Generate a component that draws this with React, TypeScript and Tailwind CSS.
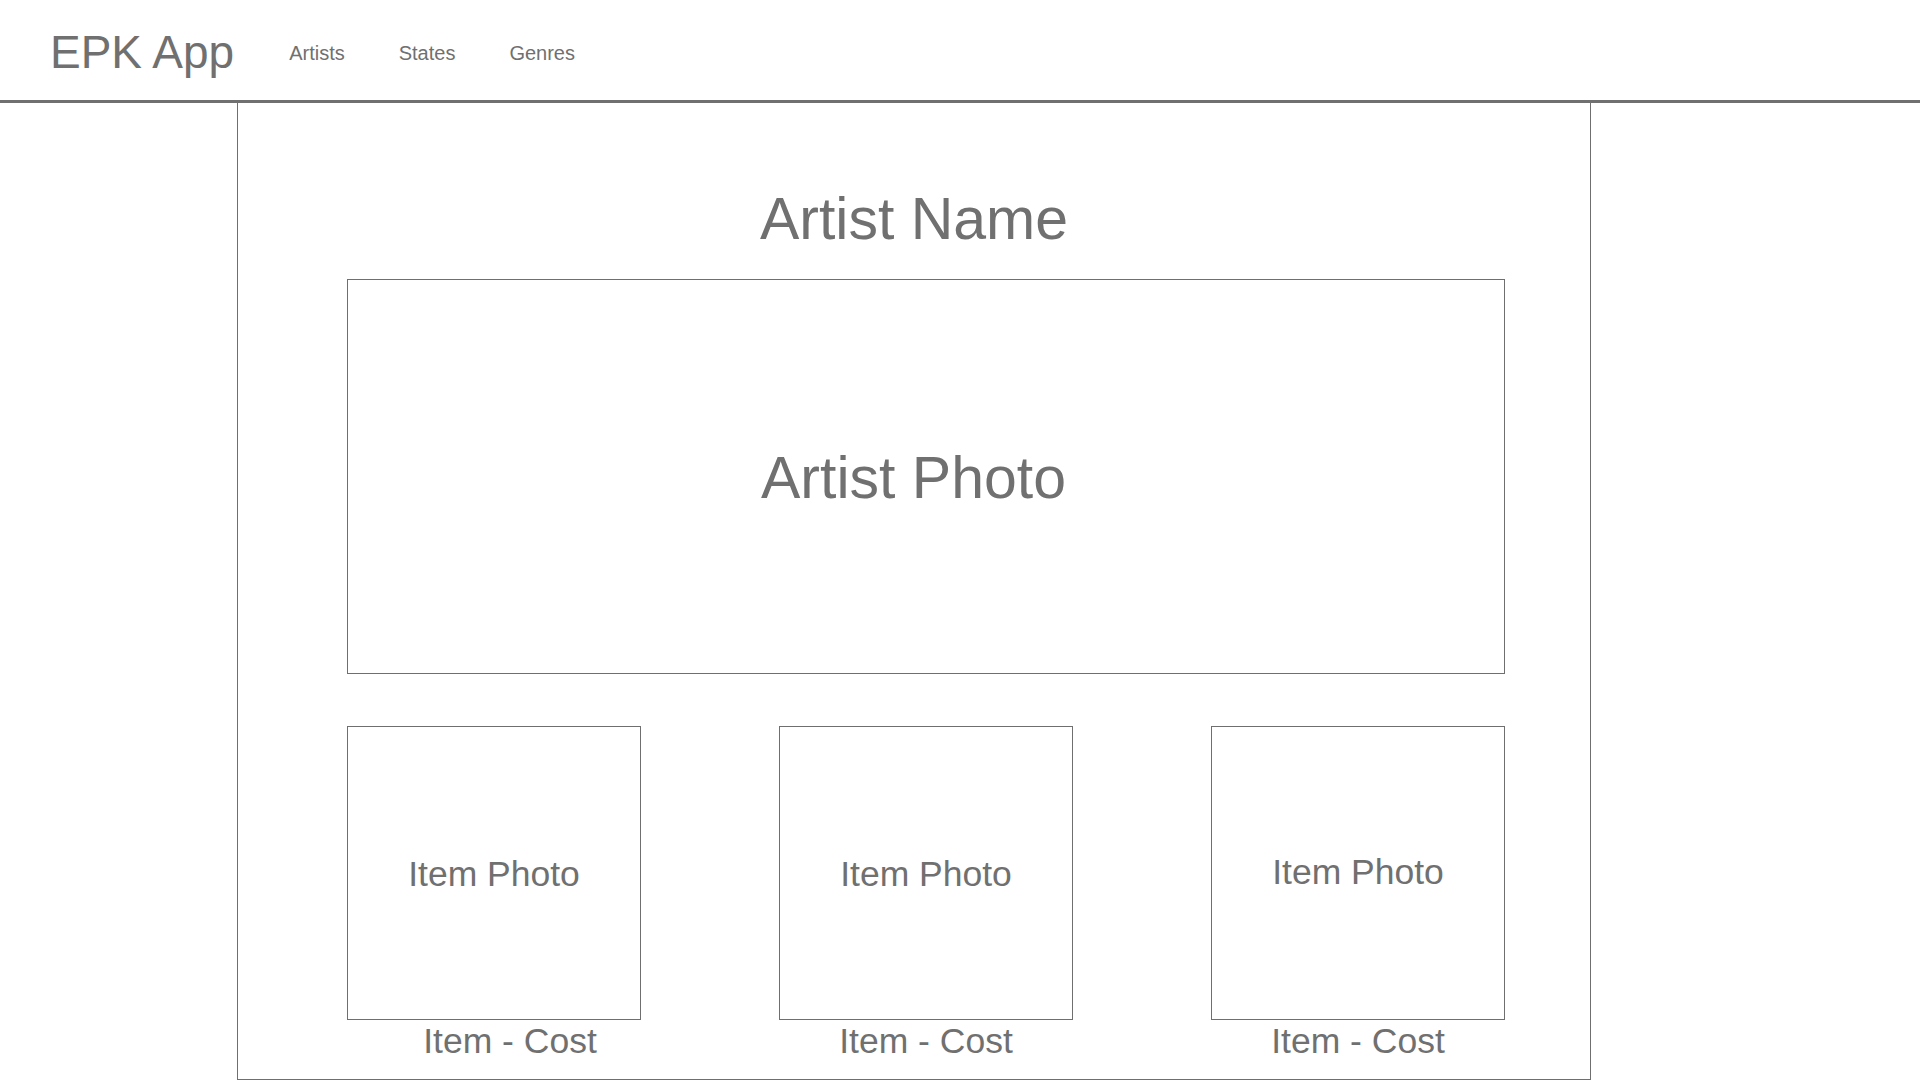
import React from 'react';

const items = [
  { id: 1, shift: 'pl-[32px]', nudge: 'pt-[3px]' },
  { id: 2, shift: '', nudge: 'pt-[3px]' },
  { id: 3, shift: '', nudge: '' },
];

const ItemCard: React.FC<{ shift: string; nudge: string }> = ({ shift, nudge }) => (
  <div className="flex flex-col w-[294px]">
    <div className={`w-[294px] h-[294px] border border-[#6f6f6f] flex items-center justify-center ${nudge}`}>
      <span className="text-[35.5px] leading-none">Item Photo</span>
    </div>
    <div className={`mt-[4px] text-center text-[35.5px] leading-none ${shift}`}>Item - Cost</div>
  </div>
);

const App: React.FC = () => {
  return (
    <div
      className="w-[1920px] h-[1080px] overflow-hidden bg-white text-[#707070]"
      style={{ fontFamily: '"Liberation Sans", Arial, sans-serif' }}
    >
      <header className="h-[103px] border-b-[3px] border-[#707070] flex items-start pl-[50px] pt-[29px]">
        <div className="text-[46px] leading-none">EPK App</div>
        <nav className="flex gap-[54px] ml-[55px] mt-[14px] text-[20px] leading-none">
          <a>Artists</a>
          <a>States</a>
          <a>Genres</a>
        </nav>
      </header>

      <main className="ml-[237px] w-[1354px] h-[977px] border-x border-b border-[#6f6f6f] flex flex-col">
        <h1 className="mt-[87px] text-center text-[59px] leading-none">Artist Name</h1>

        <div className="mt-[30px] ml-[109px] w-[1158px] h-[395px] border border-[#6f6f6f] flex items-center justify-center pr-[25px] pt-[4px]">
          <span className="text-[59px] leading-none">Artist Photo</span>
        </div>

        <div className="mt-[52px] ml-[109px] w-[1158px] flex justify-between">
          {items.map((item) => (
            <ItemCard key={item.id} shift={item.shift} nudge={item.nudge} />
          ))}
        </div>
      </main>
    </div>
  );
};

export default App;
